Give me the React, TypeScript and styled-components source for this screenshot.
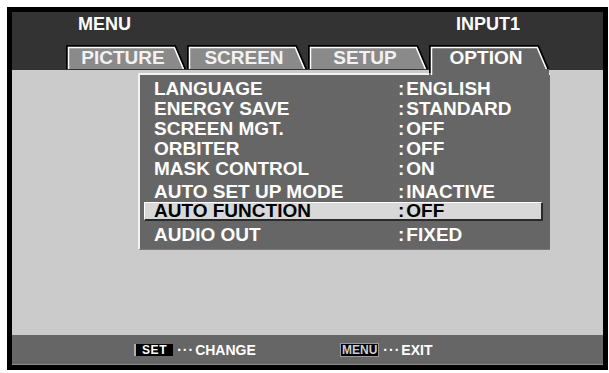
import React from 'react';
import styled, { createGlobalStyle } from 'styled-components';

const Global = createGlobalStyle`
  html, body { margin: 0; padding: 0; background: #fff; }
  body { font-family: "Liberation Sans", Arial, sans-serif; }
`;

const Frame = styled.div`
  box-sizing: border-box;
  margin: 7px 0 0 7px;
  width: 601px;
  height: 363px;
  border: 5px solid #000;
  display: flex;
  flex-direction: column;
  font-weight: bold;
`;

const Header = styled.div`
  height: 58px;
  flex: none;
  background: #333;
  display: flex;
  flex-direction: column;
  position: relative;
  z-index: 2;
`;

const TitleRow = styled.div`
  display: flex;
  justify-content: space-between;
  padding: 2px 83px 0 66px;
  font-size: 18px;
  line-height: 20px;
  color: #fff;
`;

const TabsRow = styled.div`
  margin-top: auto;
  height: 25px;
  display: flex;
  align-items: flex-start;
  gap: 1px;
  padding-left: 54px;
`;

const TabBox = styled.div<{ $active?: boolean }>`
  position: relative;
  width: 120px;
  height: ${(p) => (p.$active ? 30 : 24)}px;
  z-index: ${(p) => (p.$active ? 2 : 1)};
`;

const TabShape = styled.svg`
  position: absolute;
  left: 0;
  top: 0;
`;

const TabLabel = styled.span<{ $active?: boolean }>`
  position: relative;
  display: block;
  padding: 1px 6px 0 0;
  text-align: center;
  font-size: 19px;
  line-height: 24px;
  color: ${(p) => (p.$active ? '#fff' : '#f2f2f2')};
`;

const Content = styled.div`
  flex: 1;
  background: #cbcbcb;
  display: flex;
  flex-direction: column;
`;

const Panel = styled.div`
  box-sizing: border-box;
  margin: 3px 0 0 126px;
  width: 412px;
  height: 177px;
  background: #666;
  border-top: 2px solid #f2f2f2;
  border-left: 2px solid #f2f2f2;
  border-bottom: 1px solid #7a7a7a;
  padding-top: 4px;
  color: #fff;
  font-size: 19px;
`;

const Row = styled.div<{ $gap?: number }>`
  display: grid;
  grid-template-columns: 244px auto;
  padding-left: 14px;
  height: 20px;
  line-height: 20px;
  margin-top: ${(p) => p.$gap ?? 0}px;
  white-space: nowrap;
`;

const SelectedRow = styled.div`
  display: grid;
  grid-template-columns: 244px auto;
  margin: 0 7px 0 4px;
  padding-left: 9px;
  height: 16px;
  line-height: 16px;
  background: #d8d8d8;
  color: #000;
  border-top: 1px solid #fff;
  border-left: 1px solid #fff;
  border-right: 2px solid #2a2a2a;
  border-bottom: 2px solid #2a2a2a;
  white-space: nowrap;
`;

const Colon = styled.span`
  margin-right: 2px;
`;

const Footer = styled.div`
  box-sizing: border-box;
  height: 30px;
  flex: none;
  background: #666;
  border-bottom: 1px solid #8c8c8c;
  display: flex;
  align-items: center;
  padding-left: 122px;
  font-size: 14px;
  color: #fff;
`;

const FooterItem = styled.div<{ $width?: number }>`
  display: flex;
  align-items: center;
  width: ${(p) => (p.$width ? `${p.$width}px` : 'auto')};
`;

const Key = styled.span<{ $outlined?: boolean }>`
  display: inline-block;
  height: 12px;
  line-height: 12px;
  font-size: 12px;
  background: #000;
  color: ${(p) => (p.$outlined ? '#d0d0d0' : '#fff')};
  padding: ${(p) => (p.$outlined ? '0 1px' : '0 6px 0 6px')};
  border: ${(p) => (p.$outlined ? '1px solid #9a9a9a' : 'none')};
  border-left: ${(p) => (p.$outlined ? '1px solid #9a9a9a' : '2px solid #b0b0b0')};
  letter-spacing: ${(p) => (p.$outlined ? '0' : '0.6px')};
`;

const Dots = styled.span`
  margin: 0 1px 0 4px;
  letter-spacing: 1px;
`;

type TabProps = { label: string; active?: boolean };

const Tab: React.FC<TabProps> = ({ label, active }) => {
  const W = 120;
  const H = active ? 30 : 24;
  return (
    <TabBox $active={active}>
      <TabShape width={W} height={H} viewBox={`0 0 ${W} ${H}`}>
        {active ? (
          <>
            <polygon points={`0,0 ${W - 10},0 ${W},24 ${W},${H} 0,${H}`} fill="#666" />
            <polyline points={`1,${H - 2} 1,1 ${W - 10.6},1 ${W - 0.8},24`} stroke="#000" strokeWidth="2" fill="none" />
            <polyline points={`2.5,${H} 2.5,2.5 ${W - 11.8},2.5 ${W - 2.6},24`} stroke="#fff" strokeWidth="1.5" fill="none" />
          </>
        ) : (
          <>
            <polygon points={`0,0 ${W - 10},0 ${W},${H} 0,${H}`} fill="#8a8a8a" />
            <polyline points={`1,${H} 1,1 ${W - 10.6},1 ${W - 0.8},${H}`} stroke="#000" strokeWidth="2" fill="none" />
            <polyline points={`2.5,${H} 2.5,2.5 ${W - 11.8},2.5 ${W - 2.6},${H}`} stroke="#fff" strokeWidth="1.5" fill="none" />
          </>
        )}
      </TabShape>
      <TabLabel $active={active}>{label}</TabLabel>
    </TabBox>
  );
};

const items: { label: string; value: string; gap?: number }[] = [
  { label: 'LANGUAGE', value: 'ENGLISH' },
  { label: 'ENERGY SAVE', value: 'STANDARD' },
  { label: 'SCREEN MGT.', value: 'OFF' },
  { label: 'ORBITER', value: 'OFF' },
  { label: 'MASK CONTROL', value: 'ON' },
  { label: 'AUTO SET UP MODE', value: 'INACTIVE', gap: 3 },
];

export default function App() {
  return (
    <>
      <Global />
      <Frame>
        <Header>
          <TitleRow>
            <span>MENU</span>
            <span>INPUT1</span>
          </TitleRow>
          <TabsRow>
            <Tab label="PICTURE" />
            <Tab label="SCREEN" />
            <Tab label="SETUP" />
            <Tab label="OPTION" active />
          </TabsRow>
        </Header>
        <Content>
          <Panel>
            {items.map((it) => (
              <Row key={it.label} $gap={it.gap}>
                <span>{it.label}</span>
                <span>
                  <Colon>:</Colon>
                  {it.value}
                </span>
              </Row>
            ))}
            <SelectedRow>
              <span>AUTO FUNCTION</span>
              <span>
                <Colon>:</Colon>OFF
              </span>
            </SelectedRow>
            <Row $gap={4}>
              <span>AUDIO OUT</span>
              <span>
                <Colon>:</Colon>FIXED
              </span>
            </Row>
          </Panel>
        </Content>
        <Footer>
          <FooterItem $width={206}>
            <Key>SET</Key>
            <Dots>···</Dots>
            <span>CHANGE</span>
          </FooterItem>
          <FooterItem>
            <Key $outlined>MENU</Key>
            <Dots>···</Dots>
            <span>EXIT</span>
          </FooterItem>
        </Footer>
      </Frame>
    </>
  );
}
